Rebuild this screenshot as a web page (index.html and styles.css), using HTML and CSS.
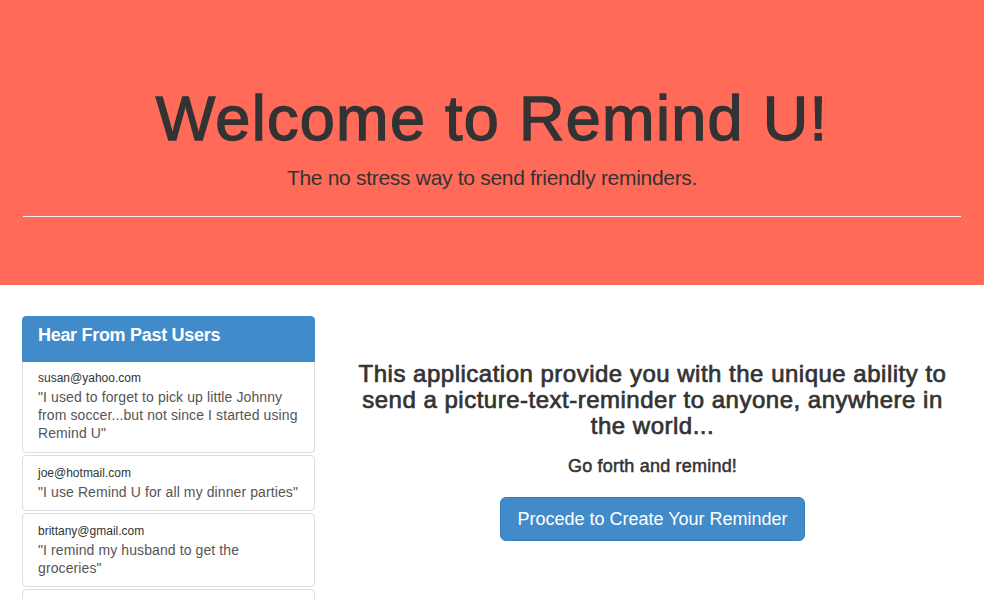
FILE: index.html
```html
<!DOCTYPE html>
<html lang="en">
<head>
<meta charset="utf-8">
<title>Remind U</title>
<link rel="stylesheet" href="styles.css">
</head>
<body>
<header class="jumbotron">
  <h1 class="title">Welcome to Remind U!</h1>
  <p class="tagline">The no stress way to send friendly reminders.</p>
  <hr class="rule">
</header>
<main class="main">
  <aside class="panel">
    <div class="panel-heading">Hear From Past Users</div>
    <ul class="reviews">
      <li class="review">
        <div class="email">susan@yahoo.com</div>
        <div class="quote">"I used to forget to pick up little Johnny from soccer...but not since I started using Remind U"</div>
      </li>
      <li class="review">
        <div class="email">joe@hotmail.com</div>
        <div class="quote">"I use Remind U for all my dinner parties"</div>
      </li>
      <li class="review">
        <div class="email">brittany@gmail.com</div>
        <div class="quote">"I remind my husband to get the groceries"</div>
      </li>
      <li class="review">
        <div class="email">mike@aol.com</div>
        <div class="quote">"Never miss a birthday again"</div>
      </li>
    </ul>
  </aside>
  <section class="intro">
    <h3 class="lead">This application provide you with the unique ability to send a picture-text-reminder to anyone, anywhere in the world...</h3>
    <h4 class="sub">Go forth and remind!</h4>
    <a class="btn" href="#">Procede to Create Your Reminder</a>
  </section>
</main>
</body>
</html>
```
FILE: styles.css
```css
html, body {
  margin: 0;
  padding: 0;
}
body {
  font-family: "Liberation Sans", Arial, Helvetica, sans-serif;
  color: #333;
  background: #fff;
}
.jumbotron {
  background: #ff6a59;
  padding: 84px 23px 68px;
  text-align: center;
}
.title {
  margin: 0;
  font-size: 63px;
  line-height: 1.1;
  font-weight: normal;
  letter-spacing: 1.3px;
  -webkit-text-stroke: 1.4px #333;
  color: #333;
}
.tagline {
  margin: 10px 0 0;
  font-size: 21px;
  line-height: 1.4;
  letter-spacing: -0.3px;
  color: #333;
}
.rule {
  margin: 23px 0 0;
  border: 0;
  border-top: 1px solid #f2f2f2;
  height: 0;
}
.main {
  display: grid;
  grid-template-columns: 293px 1fr;
  column-gap: 15px;
  padding: 31px 9px 0 22px;
  align-items: start;
}
.panel {
  display: flex;
  flex-direction: column;
}
.panel-heading {
  background: #428bca;
  color: #fff;
  font-weight: bold;
  font-size: 18px;
  line-height: 22px;
  letter-spacing: -0.3px;
  padding: 7px 15px 15px;
  border-radius: 4px 4px 0 0;
  border: 1px solid #428bca;
}
.reviews {
  list-style: none;
  margin: 0;
  padding: 0;
  display: flex;
  flex-direction: column;
  gap: 2px;
}
.review {
  border: 1px solid #ddd;
  border-radius: 4px;
  padding: 9px 15px;
}
.reviews .review:first-child {
  border-top-left-radius: 0;
  border-top-right-radius: 0;
  border-top: 0;
  padding-top: 8px;
  padding-bottom: 10px;
}
.email {
  font-size: 12px;
  line-height: 16px;
  color: #333;
}
.quote {
  margin-top: 2px;
  font-size: 14px;
  line-height: 18px;
  letter-spacing: 0.1px;
  color: #555;
}
.intro {
  text-align: center;
  padding-top: 45px;
}
.lead {
  margin: 0 auto;
  max-width: 600px;
  font-size: 24px;
  line-height: 1.1;
  font-weight: normal;
  letter-spacing: 0.5px;
  -webkit-text-stroke: 0.7px #333;
  color: #333;
}
.sub {
  margin: 17px 0 0;
  font-size: 18px;
  line-height: 1.1;
  font-weight: normal;
  letter-spacing: 0.2px;
  -webkit-text-stroke: 0.5px #333;
  color: #333;
}
.btn {
  display: inline-block;
  margin-top: 20px;
  padding: 10px 16px;
  font-size: 18px;
  line-height: 22px;
  color: #fff;
  background: #428bca;
  border: 1px solid #357ebd;
  border-radius: 6px;
  text-decoration: none;
}
```
